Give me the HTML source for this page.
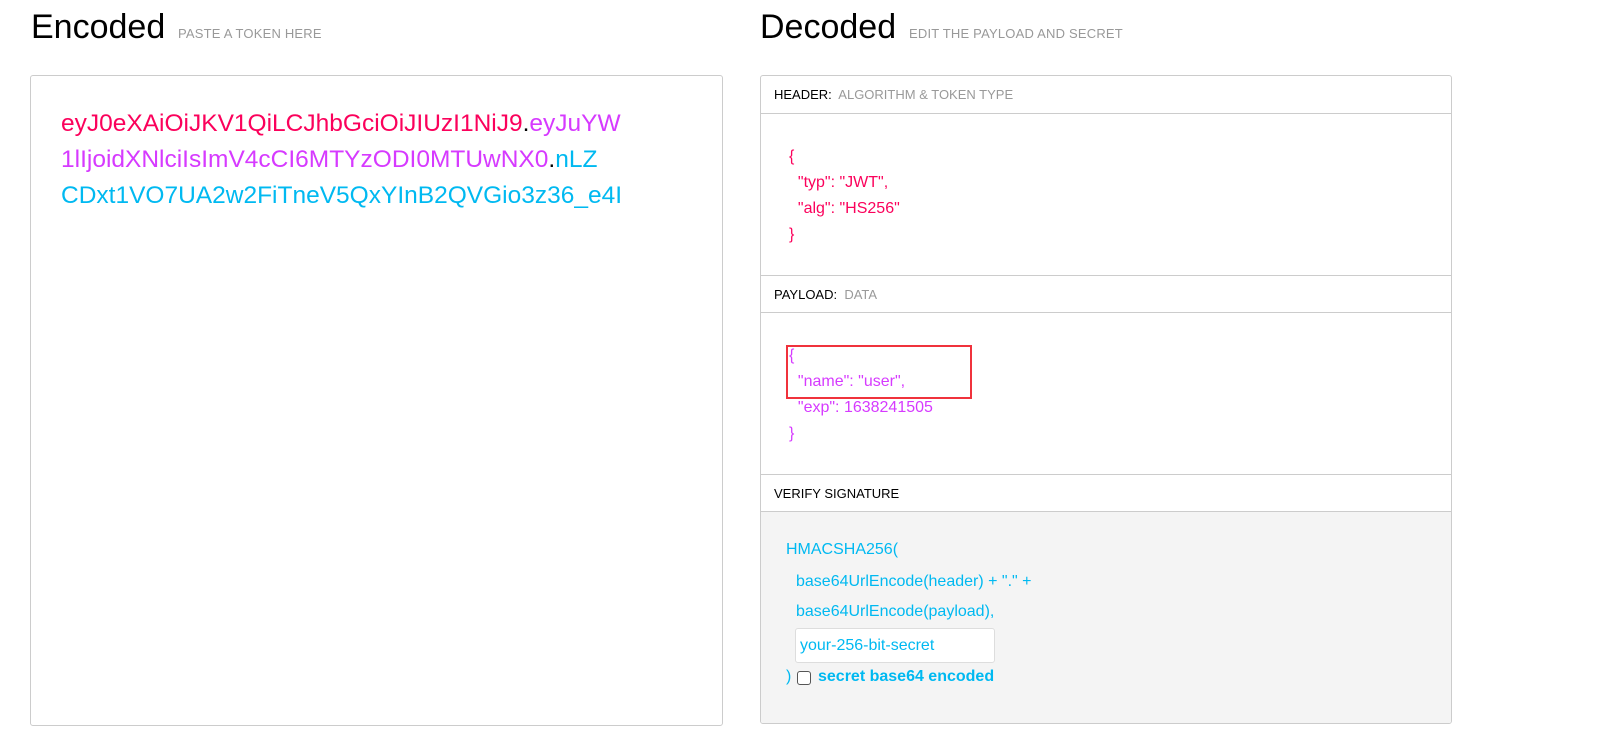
<!DOCTYPE html>
<html><head><meta charset="utf-8"><style>
*{margin:0;padding:0;box-sizing:border-box}
body{width:1599px;height:740px;background:#fff;position:relative;overflow:hidden;font-family:"Liberation Sans",sans-serif}
.a{position:absolute;white-space:nowrap}
.h1{font-size:34px;color:#000;top:8px}
.sub{font-size:13px;color:#999;top:26px;letter-spacing:.2px}
.box{position:absolute;border:1px solid #ccc;border-radius:3px}
.tok{font-size:24.5px;line-height:36px;left:61px;top:106px}
.r{color:#fb015b}.p{color:#d63aff}.c{color:#00b9f1}.k{color:#000}
.bar{position:absolute;left:0;right:0;border-bottom:1px solid #ccc;font-size:13px;color:#000;padding-left:13px;line-height:37px}
.bar span{color:#999}
.js{font-size:16px;line-height:26px}
</style></head><body>
<div class="a h1" style="left:31px">Encoded</div>
<div class="a sub" style="left:178px">PASTE A TOKEN HERE</div>
<div class="a h1" style="left:760px">Decoded</div>
<div class="a sub" style="left:909px">EDIT THE PAYLOAD AND SECRET</div>

<div class="box" style="left:30px;top:75px;width:693px;height:651px"></div>
<div class="a tok"><span class="r">eyJ0eXAiOiJKV1QiLCJhbGciOiJIUzI1NiJ9</span><span class="k">.</span><span class="p">eyJuYW</span><br><span class="p">1lIjoidXNlciIsImV4cCI6MTYzODI0MTUwNX0</span><span class="k">.</span><span class="c">nLZ</span><br><span class="c">CDxt1VO7UA2w2FiTneV5QxYInB2QVGio3z36_e4I</span></div>

<div class="box" style="left:760px;top:75px;width:692px;height:649px;overflow:hidden">
 <div class="bar" style="top:0;height:38px">HEADER:&nbsp; <span>ALGORITHM &amp; TOKEN TYPE</span></div>
 <div class="bar" style="top:199px;height:38px;border-top:1px solid #ccc">PAYLOAD:&nbsp; <span>DATA</span></div>
 <div class="bar" style="top:398px;height:38px;border-top:1px solid #ccc">VERIFY SIGNATURE</div>
 <div style="position:absolute;left:0;right:0;top:436px;bottom:0;background:#f4f4f4"></div>
</div>

<div class="a js r" style="left:789px;top:144px">{<br>&nbsp;&nbsp;"typ": "JWT",<br>&nbsp;&nbsp;"alg": "HS256"<br>}</div>
<div class="a js p" style="left:789px;top:343px">{<br>&nbsp;&nbsp;"name": "user",<br>&nbsp;&nbsp;"exp": 1638241505<br>}</div>
<div class="a" style="left:786px;top:345px;width:186px;height:54px;border:2px solid #f0323c"></div>

<div class="a c" style="left:786px;top:541px;font-size:16px">HMACSHA256(</div>
<div class="a c" style="left:796px;top:573px;font-size:16px">base64UrlEncode(header) + "." +</div>
<div class="a c" style="left:796px;top:603px;font-size:16px">base64UrlEncode(payload),</div>
<div class="a c" style="left:795px;top:628px;width:200px;height:35px;border:1px solid #ddd;border-radius:3px;background:#fff;font-size:16px;line-height:33px;padding-left:4px">your-256-bit-secret</div>
<div class="a c" style="left:786px;top:668px;font-size:16px">)</div>
<div class="a" style="left:797px;top:671px;width:14px;height:14px;border:1px solid #555;border-radius:3px;background:#fff"></div>
<div class="a c" style="left:818px;top:668px;font-size:16px;font-weight:bold">secret base64 encoded</div>
</body></html>
